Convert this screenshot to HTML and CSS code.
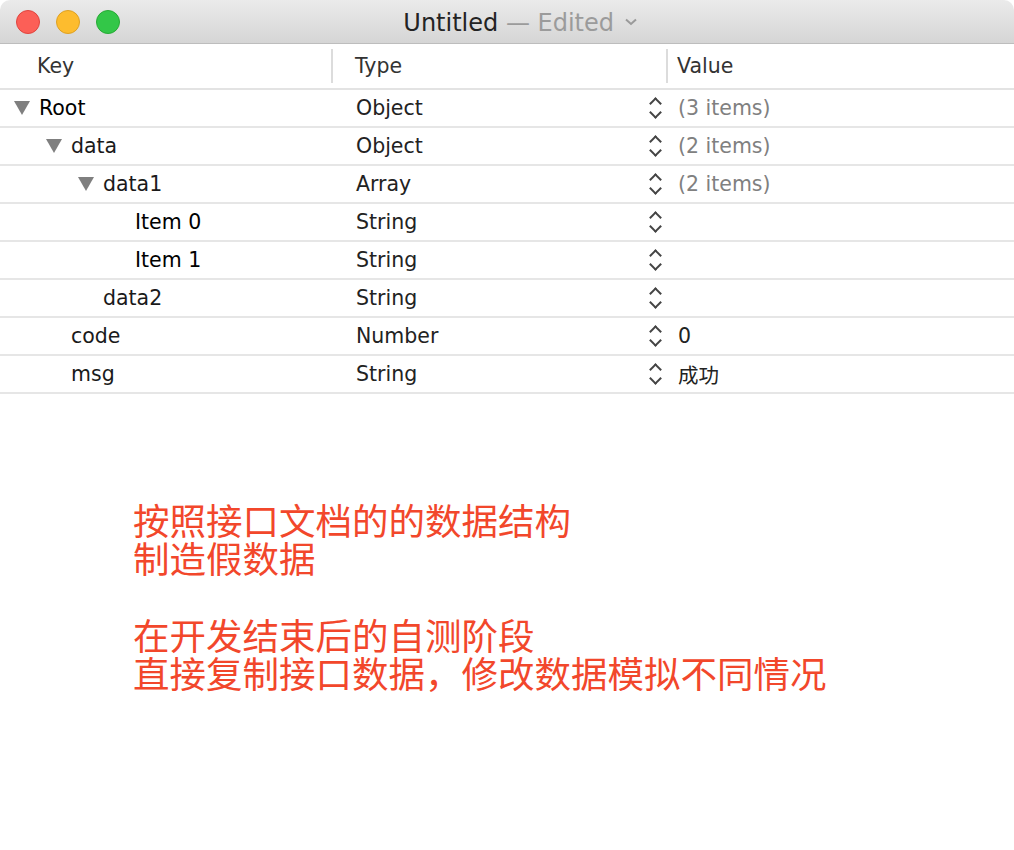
FILE: index.html
```html
<!DOCTYPE html>
<html lang="zh">
<head>
<meta charset="utf-8">
<title>Untitled</title>
<link rel="stylesheet" href="styles.css">
</head>
<body>
<div class="window">
  <div class="titlebar">
    <div class="lights">
      <span class="light red"></span>
      <span class="light yellow"></span>
      <span class="light green"></span>
    </div>
    <div class="title">Untitled <span class="edited">— Edited</span>
      <svg class="chev" width="14" height="10" viewBox="0 0 14 10"><path d="M2 2.5 L7 7 L12 2.5" fill="none" stroke="#9a9a9a" stroke-width="2"/></svg>
    </div>
  </div>

  <div class="header">
    <div class="hcell hkey">Key</div>
    <div class="hcell htype">Type</div>
    <div class="hcell hvalue">Value</div>
  </div>

  <div class="rows">
    <div class="row">
      <div class="key l0"><span class="tri"></span><span class="ktext bold">Root</span></div>
      <div class="type"><span>Object</span><span class="stepper"></span></div>
      <div class="value muted">(3 items)</div>
    </div>
    <div class="row">
      <div class="key l1"><span class="tri"></span><span class="ktext">data</span></div>
      <div class="type"><span>Object</span><span class="stepper"></span></div>
      <div class="value muted">(2 items)</div>
    </div>
    <div class="row">
      <div class="key l2"><span class="tri"></span><span class="ktext">data1</span></div>
      <div class="type"><span>Array</span><span class="stepper"></span></div>
      <div class="value muted">(2 items)</div>
    </div>
    <div class="row">
      <div class="key l3"><span class="notri"></span><span class="ktext bold">Item 0</span></div>
      <div class="type"><span>String</span><span class="stepper"></span></div>
      <div class="value"></div>
    </div>
    <div class="row">
      <div class="key l3"><span class="notri"></span><span class="ktext bold">Item 1</span></div>
      <div class="type"><span>String</span><span class="stepper"></span></div>
      <div class="value"></div>
    </div>
    <div class="row">
      <div class="key l2"><span class="notri"></span><span class="ktext">data2</span></div>
      <div class="type"><span>String</span><span class="stepper"></span></div>
      <div class="value"></div>
    </div>
    <div class="row">
      <div class="key l1"><span class="notri"></span><span class="ktext">code</span></div>
      <div class="type"><span>Number</span><span class="stepper"></span></div>
      <div class="value">0</div>
    </div>
    <div class="row">
      <div class="key l1"><span class="notri"></span><span class="ktext">msg</span></div>
      <div class="type"><span>String</span><span class="stepper"></span></div>
      <div class="value">成功</div>
    </div>
  </div>

  <div class="note">
    <div class="para">
      <div class="line">按照接口文档的的数据结构</div>
      <div class="line">制造假数据</div>
    </div>
    <div class="para">
      <div class="line">在开发结束后的自测阶段</div>
      <div class="line">直接复制接口数据，修改数据模拟不同情况</div>
    </div>
  </div>
</div>
</body>
</html>
```

FILE: styles.css
```css
html, body {
  margin: 0;
  padding: 0;
  background: #ffffff;
}
body {
  font-family: "DejaVu Sans", "Noto Sans CJK SC", sans-serif;
  color: #1e1e1e;
}
.window {
  width: 1014px;
  height: 850px;
  overflow: hidden;
  background: #ffffff;
}
.titlebar {
  height: 43px;
  border-bottom: 1px solid #bdbdbd;
  background: linear-gradient(#ebebeb, #d5d5d5);
  border-radius: 10px 10px 0 0;
  display: flex;
  align-items: center;
  position: relative;
}
.lights {
  display: flex;
  gap: 16px;
  padding-left: 16px;
  position: absolute;
  left: 0;
  top: 10px;
}
.light {
  width: 24px;
  height: 24px;
  border-radius: 50%;
  box-sizing: border-box;
}
.red { background: #fc5f57; border: 1px solid #e0443e; }
.yellow { background: #fdbc2e; border: 1px solid #dea123; }
.green { background: #33c748; border: 1px solid #27aa35; }
.title {
  flex: 1;
  text-align: center;
  padding-left: 27px;
  padding-top: 4px;
  font-size: 24px;
  color: #232323;
  line-height: 39px;
}
.edited { color: #9b9b9b; }
.chev { vertical-align: 4px; margin-left: 2px; }

.header {
  display: grid;
  grid-template-columns: 333px 335px 1fr;
  height: 44px;
  border-bottom: 2px solid #e3e3e3;
  align-items: center;
}
.hcell {
  font-size: 20.5px;
  color: #333333;
  height: 34px;
  line-height: 34px;
  box-sizing: border-box;
}
.hkey { padding-left: 37px; border-right: 2px solid #dcdcdc; }
.htype { padding-left: 22px; border-right: 2px solid #dcdcdc; }
.hvalue { padding-left: 9px; }

.row {
  display: grid;
  grid-template-columns: 333px 335px 1fr;
  height: 36px;
  border-bottom: 2px solid #e6e6e6;
  align-items: center;
  font-size: 20.5px;
}
.key {
  display: flex;
  align-items: center;
  padding-left: 14px;
}
.l1 { padding-left: 46px; }
.l2 { padding-left: 78px; }
.l3 { padding-left: 110px; }
.tri, .notri {
  width: 16px;
  height: 14px;
  margin-right: 9px;
  flex: none;
}
.tri {
  background: #7f7f7f;
  clip-path: polygon(0 0, 100% 0, 50% 100%);
}
.ktext { color: #1a1a1a; }
.bold { color: #000; }
.type {
  display: flex;
  align-items: center;
  justify-content: space-between;
  padding-left: 23px;
  padding-right: 6px;
  color: #222;
}
.stepper {
  width: 14px;
  height: 24px;
  position: relative;
}
.stepper::before, .stepper::after {
  content: "";
  position: absolute;
  left: 2.5px;
  width: 9px;
  height: 9px;
  border-left: 2px solid #444;
  border-top: 2px solid #444;
  box-sizing: border-box;
}
.stepper::before { top: 3px; transform: rotate(45deg); }
.stepper::after { bottom: 3px; transform: rotate(225deg); }
.value {
  padding-left: 10px;
  color: #222;
}
.muted { color: #808080; }

.note {
  margin-top: 107px;
  padding-left: 133px;
  font-family: "Noto Sans CJK SC", sans-serif;
  font-size: 36.5px;
  color: #f2472b;
  display: flex;
  flex-direction: column;
  gap: 39px;
}
.line {
  height: 38px;
  line-height: 38px;
  white-space: nowrap;
}
```
